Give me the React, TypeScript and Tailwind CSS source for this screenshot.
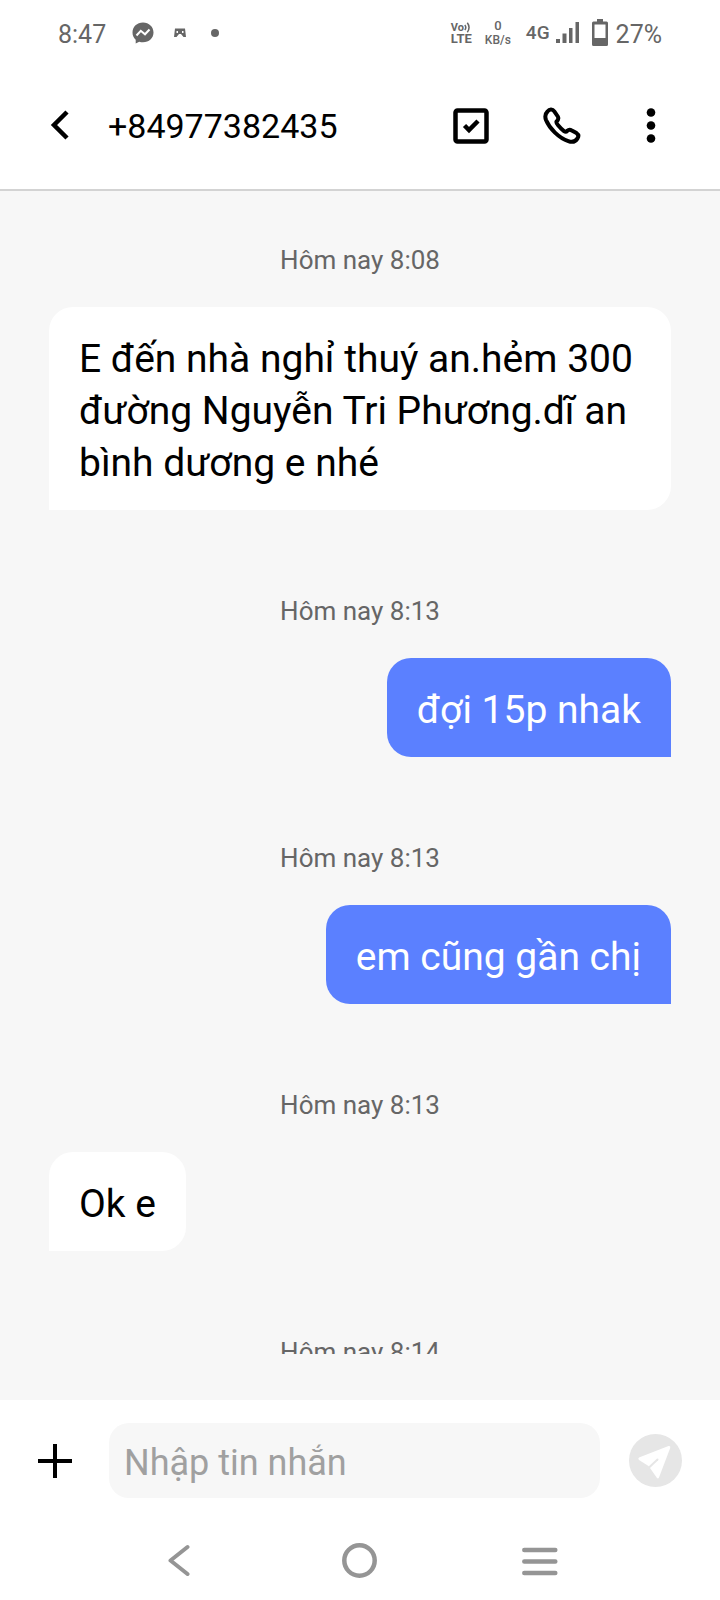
import React from 'react'

type Message = {
  time: string
  text?: string
  mine?: boolean
}

const messages: Message[] = [
  { time: '8:08', text: 'E đến nhà nghỉ thuý an.hẻm 300 đường Nguyễn Tri Phương.dĩ an bình dương e nhé' },
  { time: '8:13', text: 'đợi 15p nhak', mine: true },
  { time: '8:13', text: 'em cũng gần chị', mine: true },
  { time: '8:13', text: 'Ok e' },
  { time: '8:14' },
]

function StatusBar() {
  return (
    <div className="flex h-[66px] shrink-0 items-center justify-between px-[58px] text-[#666]">
      <div className="flex items-center">
        <span className="pt-[3px] text-[25px] leading-8">8:47</span>
        <svg className="ml-[26px]" width="22" height="22" viewBox="0 0 22 22">
          <path fill="currentColor" d="M11 0.5C5 0.5 0.5 4.8 0.5 10.5c0 3 1.2 5.500 3.200 7.300V21.500l3.500-1.800c1.200.4 2.500.6 3.800.6 6 0 10.500-4.200 10.500-9.800S17 0.500 11 0.500z" />
          <path fill="none" stroke="#fff" strokeWidth="2" d="M4.500 13.500 8.800 8.800l4.200 3.500 4.500-4.800" />
        </svg>
        <svg className="ml-5" width="12" height="10" viewBox="0 0 12 10">
          <path fill="currentColor" fillRule="evenodd" d="M1 0.500h10L12 9H9.500L7 6H5L2.500 9H0zM2.500 3v2h1.500V3zM8 3v2h1.500V3z" />
        </svg>
        <span className="ml-[25px] size-2 rounded-full bg-[#666]" />
      </div>
      <div className="flex items-center">
        <div className="flex flex-col items-start font-bold">
          <div className="flex items-center">
            <span className="text-[11px] leading-[11px]">Vo</span>
            <svg width="7" height="11" viewBox="0 0 7 11" fill="none" stroke="currentColor" strokeWidth="1.500">
              <path d="M.8 3q2 2.500 0 5M3.300 .8q3.500 4.700 0 9.400" />
            </svg>
          </div>
          <span className="text-[13px] leading-[12px]">LTE</span>
        </div>
        <div className="ml-[13px] flex flex-col items-center font-medium">
          <span className="text-[13px] leading-[14px]">0</span>
          <span className="text-[12px] leading-[14px]">KB/s</span>
        </div>
        <span className="ml-[15px] text-[19px] font-medium leading-8">4G</span>
        <svg className="ml-[6px]" width="24" height="22" viewBox="0 0 24 22" fill="currentColor">
          <path d="M0 17h4v4H0zM6.500 11.500h4V21h-4zM13 6h3.500v15H13zM19.500 0h3.500v21h-3.500z" />
        </svg>
        <svg className="ml-3" width="16" height="28" viewBox="0 0 16 28">
          <path fill="currentColor" fillRule="evenodd" d="M5 0h6v2.500h3.500q1.500 0 1.500 1.500v21.500q0 1.500-1.500 1.500h-13Q0 27 0 25.500V4q0-1.500 1.500-1.500H5zM2.500 5.500V19h11V5.500z" />
        </svg>
        <span className="ml-2 pt-[3px] text-[25px] leading-8">27%</span>
      </div>
    </div>
  )
}

function Header() {
  return (
    <header className="flex h-[125px] shrink-0 items-center justify-between border-b-2 border-[#d3d3d3] pb-[3px] pl-[50px] pr-16">
      <div className="flex items-center">
        <button type="button" aria-label="Quay lại">
          <svg width="20" height="34" viewBox="0 0 20 34" fill="none" stroke="#000" strokeWidth="4.500">
            <path d="M17 3 4 16 17 29" />
          </svg>
        </button>
        <h1 className="ml-[38px] text-[34px] leading-10">+84977382435</h1>
      </div>
      <div className="flex items-center">
        <button type="button" aria-label="Chọn tin nhắn">
          <svg width="36" height="36" viewBox="0 0 36 36" fill="none" stroke="#000" strokeWidth="4.500">
            <rect x="2.500" y="2.500" width="31" height="31" rx="2" />
            <path d="m11.500 17.500 4.500 4.500 9-9" />
          </svg>
        </button>
        <button type="button" aria-label="Gọi" className="ml-[54px]">
          <svg width="38" height="38" viewBox="0 0 38 38" fill="none" stroke="#000" strokeWidth="4" strokeLinejoin="round">
            <path d="M4.500 4.500C6.500 2 9.500 1.800 11.300 4.300l3.500 5.200c1.200 2 .3 3.500-1.300 5-.6 1 .3 2.200 1.600 3.800 1.800 2.200 3.700 4.200 5.900 5.800 1.500 1 2.300.8 3.300-.3 1.300-1.200 2.800-1.300 4.500-.3l4.700 2.600c2.200 1.500 2.300 3.300 1 5.300-2 3.300-5.200 4.200-9.200 2.700C16 31 6.500 21.500 3 13 1.700 9.500 2 7 4.500 4.500z" />
          </svg>
        </button>
        <button type="button" aria-label="Thêm" className="ml-[65px]">
          <svg width="10" height="38" viewBox="0 0 10 38">
            <circle cx="5" cy="5.500" r="4.300" />
            <circle cx="5" cy="18.500" r="4.300" />
            <circle cx="5" cy="31.500" r="4.300" />
          </svg>
        </button>
      </div>
    </header>
  )
}

function Bubble({ text, mine }: { text: string; mine?: boolean }) {
  return (
    <p
      className={
        mine
          ? 'self-end rounded-3xl rounded-br-none bg-[#5b80ff] px-[30px] pb-[21px] pt-[26px] text-[39px] leading-[52px] text-white'
          : 'self-start rounded-3xl rounded-bl-none bg-white px-[30px] pb-[21px] pt-[26px] text-[39px] leading-[52px] text-black'
      }
    >
      {text}
    </p>
  )
}

function Composer() {
  return (
    <form className="flex shrink-0 items-center pb-[22px] pl-[37px] pr-[38px] pt-[23px]" onSubmit={(e) => e.preventDefault()}>
      <button type="button" aria-label="Đính kèm">
        <svg width="36" height="36" viewBox="0 0 36 36" stroke="#000" strokeWidth="4">
          <path d="M18 1v34M1 18h34" />
        </svg>
      </button>
      <input
        type="text"
        aria-label="Nhập tin nhắn"
        placeholder="Nhập tin nhắn"
        className="ml-9 h-[75px] min-w-0 flex-1 rounded-[20px] bg-[#f7f7f7] px-[15px] pt-1 text-[36px] outline-none placeholder:text-[#a0a0a0]"
      />
      <button type="submit" aria-label="Gửi" className="ml-[29px]">
        <svg width="53" height="53" viewBox="0 0 53 53">
          <circle cx="26.500" cy="26.500" r="26.500" fill="#e6e6e6" />
          <path fill="#fff" d="M10 23.500 39.500 12q2.300-.5 1.700 2L30 43.500q-1 2-2.200.3L21 34l-1.500-2L10 26q-1.500-1.500 0-2.500z" />
          <path stroke="#e6e6e6" strokeWidth="2" strokeLinecap="round" d="M19.500 34 28.500 25.500" />
        </svg>
      </button>
    </form>
  )
}

function NavBar() {
  return (
    <nav className="grid h-20 shrink-0 grid-cols-3 items-center justify-items-center px-[12.5%] text-[#959595]">
      <button type="button" aria-label="Trở về">
        <svg width="24" height="36" viewBox="0 0 24 36" fill="none" stroke="currentColor" strokeWidth="4" strokeLinecap="round" strokeLinejoin="round">
          <path d="M19.500 5 2.500 18.500l17 13.500" />
        </svg>
      </button>
      <button type="button" aria-label="Màn hình chính">
        <svg width="36" height="36" viewBox="0 0 36 36" fill="none" stroke="currentColor" strokeWidth="4.500">
          <circle cx="17.500" cy="18.500" r="15.200" />
        </svg>
      </button>
      <button type="button" aria-label="Ứng dụng gần đây">
        <svg width="36" height="36" viewBox="0 0 36 36" stroke="currentColor" strokeWidth="4.500" strokeLinecap="round">
          <path d="M2.300 8h31M2.300 19.500h31M2.300 31h31" />
        </svg>
      </button>
    </nav>
  )
}

export default function App() {
  return (
    <div className="flex h-screen flex-col bg-white font-[Roboto,sans-serif] text-black">
      <StatusBar />
      <Header />
      <main className="flex min-h-0 flex-1 flex-col bg-[#f7f7f7] pb-[46px]">
        <div className="flex min-h-0 flex-1 flex-col gap-[85px] overflow-y-auto px-[49px] pt-[53px] [scrollbar-width:none]">
          {messages.map((message, i) => (
            <div key={i} className="flex shrink-0 flex-col gap-[31px]">
              <time className="text-center text-[26px] leading-8 text-[#666]">Hôm nay {message.time}</time>
              {message.text && <Bubble text={message.text} mine={message.mine} />}
            </div>
          ))}
        </div>
      </main>
      <Composer />
      <NavBar />
    </div>
  )
}
